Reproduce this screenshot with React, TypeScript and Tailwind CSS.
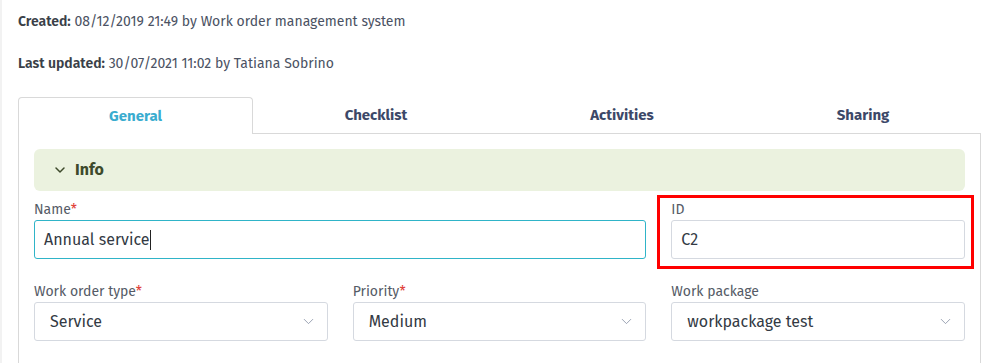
import React from 'react';
import { ChevronDown } from 'lucide-react';

const font = { fontFamily: '"Fira Sans", Lato, "Open Sans", sans-serif' };

const Label: React.FC<{ text: string; required?: boolean }> = ({ text, required }) => (
  <div className="text-[14px] leading-[20px] text-[#555b66]">
    {text}
    {required && <span className="text-[#e0443c]">*</span>}
  </div>
);

const SelectBox: React.FC<{ value: string }> = ({ value }) => (
  <div className="h-[39px] rounded-[3px] border border-[#d5d9e0] bg-white flex items-center justify-between pl-[15px] pr-[10px]">
    <span className="text-[16px] text-[#333a44]">{value}</span>
    <ChevronDown size={17} strokeWidth={1.2} className="text-[#8a93a6]" />
  </div>
);

const tabs = [
  { label: 'General', width: 'w-[235px]' },
  { label: 'Checklist', width: 'w-[246px]' },
  { label: 'Activities', width: 'w-[246px]' },
  { label: 'Sharing', width: 'flex-1' },
];

export default function App() {
  const [active, setActive] = React.useState(0);

  return (
    <div className="w-[999px] h-[363px] overflow-hidden bg-white border-l-2 border-[#f2f2f2]" style={font}>
      <div className="pl-4 pr-[18px] pt-[12px]">
        {/* Meta info */}
        <p className="text-[14px] leading-[20px] text-[#4b5263]">
          <span className="font-semibold text-[#3a3f48]">Created:</span> 08/12/2019 21:49 by Work order management system
        </p>
        <p className="mt-[22px] text-[14px] leading-[20px] text-[#4b5263]">
          <span className="font-semibold text-[#3a3f48]">Last updated:</span> 30/07/2021 11:02 by Tatiana Sobrino
        </p>

        {/* Tabs */}
        <div className="mt-[23px] flex">
          {tabs.map((t, i) => (
            <button
              key={t.label}
              onClick={() => setActive(i)}
              className={`h-[37px] pt-px text-[15px] font-bold ${t.width} ${
                active === i
                  ? 'border-x border-t border-[#d9d9d9] rounded-t-[4px] text-[#3aaccf]'
                  : 'border-b border-[#d9d9d9] text-[#3c4868]'
              }`}
            >
              {t.label}
            </button>
          ))}
        </div>

        {/* Panel */}
        <div className="border-x border-[#d9d9d9] px-[15px] pt-[15px] h-[300px]">
          <div className="h-[42px] rounded-[6px] bg-[#ebf2df] flex items-center pl-[18px] gap-[7px] text-[#3d4a2b]">
            <ChevronDown size={16} strokeWidth={2.25} />
            <span className="text-[16px] font-bold">Info</span>
          </div>

          <div className="mt-[9px] grid grid-cols-3 gap-x-[25px]">
            <div className="col-span-2">
              <Label text="Name" required />
              <div className="h-[39px] rounded-[3px] border border-[#2fb4c8] flex items-center pl-[9px]">
                <span className="text-[16px] text-[#333a44]">Annual service</span>
                <span className="w-px h-[20px] bg-[#222]" />
              </div>
            </div>
            <div className="relative">
              <Label text="ID" />
              <div className="h-[39px] rounded-[3px] border border-[#d5d9e0] flex items-center pl-[9px]">
                <span className="text-[16px] text-[#333a44]">C2</span>
              </div>
              {/* highlight */}
              <div className="absolute -left-[14px] -right-[9px] -top-[5px] -bottom-[10px] border-[3px] border-[#ff0000] pointer-events-none" />
            </div>

            <div className="mt-[23px]">
              <Label text="Work order type" required />
              <SelectBox value="Service" />
            </div>
            <div className="mt-[23px]">
              <Label text="Priority" required />
              <SelectBox value="Medium" />
            </div>
            <div className="mt-[23px]">
              <Label text="Work package" />
              <SelectBox value="workpackage test" />
            </div>
          </div>
        </div>
      </div>
    </div>
  );
}
